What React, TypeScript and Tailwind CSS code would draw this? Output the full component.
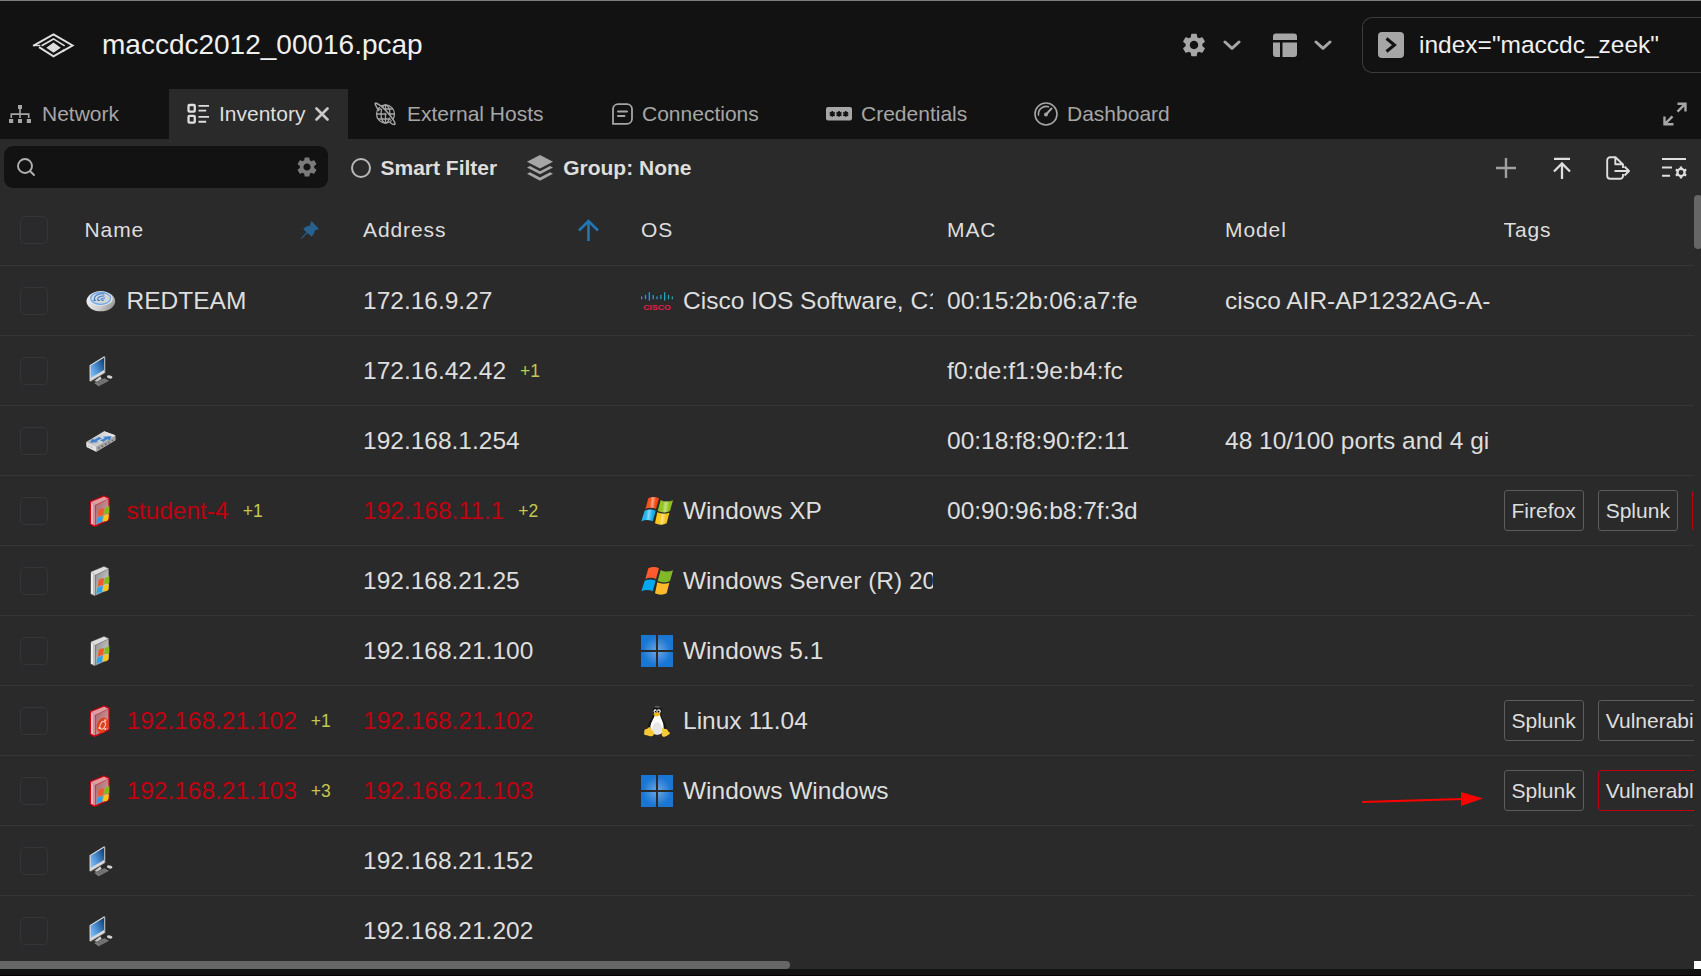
import React from "react";
import { MdSettings } from "react-icons/md";

type Device = "ap" | "pc" | "switch" | "winServer" | "winServerAlert" | "ubuntuAlert";
type OsLogo = "cisco" | "xp" | "win7" | "win11" | "linux";

interface Host {
  device: Device;
  name?: string;
  nameExtra?: string;
  address: string;
  addressExtra?: string;
  alert?: boolean;
  logo?: OsLogo;
  os?: string;
  mac?: string;
  model?: string;
  tags?: { label: string; alert?: boolean }[];
}

const hosts: Host[] = [
  { device: "ap", name: "REDTEAM", address: "172.16.9.27", logo: "cisco", os: "Cisco IOS Software, C1", mac: "00:15:2b:06:a7:fe", model: "cisco AIR-AP1232AG-A-" },
  { device: "pc", address: "172.16.42.42", addressExtra: "+1", mac: "f0:de:f1:9e:b4:fc" },
  { device: "switch", address: "192.168.1.254", mac: "00:18:f8:90:f2:11", model: "48 10/100 ports and 4 gi" },
  { device: "winServerAlert", name: "student-4", nameExtra: "+1", address: "192.168.11.1", addressExtra: "+2", alert: true, logo: "xp", os: "Windows XP", mac: "00:90:96:b8:7f:3d", tags: [{ label: "Firefox" }, { label: "Splunk" }, { label: "Vulnerable", alert: true }] },
  { device: "winServer", address: "192.168.21.25", logo: "win7", os: "Windows Server (R) 20" },
  { device: "winServer", address: "192.168.21.100", logo: "win11", os: "Windows 5.1" },
  { device: "ubuntuAlert", name: "192.168.21.102", nameExtra: "+1", address: "192.168.21.102", alert: true, logo: "linux", os: "Linux 11.04", tags: [{ label: "Splunk" }, { label: "Vulnerability" }] },
  { device: "winServerAlert", name: "192.168.21.103", nameExtra: "+3", address: "192.168.21.103", alert: true, logo: "win11", os: "Windows Windows", tags: [{ label: "Splunk" }, { label: "Vulnerable", alert: true }] },
  { device: "pc", address: "192.168.21.152" },
  { device: "pc", address: "192.168.21.202" },
];

function Gradients() {
  return (
    <svg className="absolute h-0 w-0" aria-hidden="true">
      <defs>
        <radialGradient id="win11" gradientUnits="userSpaceOnUse" cx="48" cy="48" r="58">
          <stop offset="0" stopColor="#6ba7e6" />
          <stop offset="0.75" stopColor="#1976d2" />
        </radialGradient>
        <linearGradient id="apBody" x1="0" x2="1" y1="0.3" y2="0.8">
          <stop offset="0" stopColor="#f2f2f2" />
          <stop offset="0.55" stopColor="#d0d0d0" />
          <stop offset="1" stopColor="#8c8c8c" />
        </linearGradient>
        <linearGradient id="screen" x1="0" x2="1" y1="1" y2="0.2">
          <stop offset="0" stopColor="#8fc4f5" />
          <stop offset="0.5" stopColor="#4b8fd4" />
          <stop offset="1" stopColor="#12437c" />
        </linearGradient>
        <linearGradient id="face" x1="0" x2="1" y1="0" y2="1">
          <stop offset="0" stopColor="#8e8e8e" />
          <stop offset="1" stopColor="#d8d8d8" />
        </linearGradient>
        <linearGradient id="faceRed" x1="0" x2="1" y1="0" y2="1">
          <stop offset="0" stopColor="#a2686c" />
          <stop offset="1" stopColor="#e2a5a8" />
        </linearGradient>
        <linearGradient id="slab" x1="0" x2="1">
          <stop offset="0" stopColor="#b9b9b9" />
          <stop offset="1" stopColor="#ececec" />
        </linearGradient>
        <linearGradient id="shine" x1="0" x2="1" y1="0" y2="0.1">
          <stop offset="0" stopColor="#fff" stopOpacity="0" />
          <stop offset="0.4" stopColor="#fff" stopOpacity="0.1" />
          <stop offset="0.55" stopColor="#fff" stopOpacity="0.5" />
          <stop offset="0.8" stopColor="#fff" stopOpacity="0" />
        </linearGradient>
      </defs>
    </svg>
  );
}

function ServerCase({ alert, children }: { alert?: boolean; children: React.ReactNode }) {
  return (
    <>
      <path d="M17 20 57 3 72 10V74L28 94 16 87Z" fill={alert ? "#c22a33" : "#6d6d6d"} stroke={alert ? "#d3000f" : "none"} strokeWidth={alert ? 4 : 0} strokeLinejoin="round" />
      <path d="M18 21 57 5 70 11 30 30Z" fill={alert ? "#dc9ea1" : "#dedede"} />
      <path d="M18 22 30 30V91L18 86Z" fill={alert ? "#f0b9bb" : "#ececec"} />
      <path d="M24 26 30 30V91L24 89Z" fill={alert ? "#d28f93" : "#c0c0c0"} />
      <path d="M32 31 70 13V72L32 90Z" fill={alert ? "url(#faceRed)" : "url(#face)"} />
      {children}
    </>
  );
}

function IsoWindows() {
  return (
    <g>
      <path d="M41 46C46 38 51 43 57 39L55 60C50 63 45 59 38 67Z" fill="#f1592a" />
      <path d="M59 40C64 36 68 39 73 31V54C68 59 63 54 57 59Z" fill="#86b916" />
      <path d="M37 70C43 62 48 66 54 62L51 80C46 84 41 79 34 88Z" fill="#2ba5e8" />
      <path d="M57 62C62 58 67 61 72 57L69 75C64 81 59 77 53 81Z" fill="#fbc617" />
    </g>
  );
}

function DeviceIcon({ device }: { device: Device }) {
  return (
    <svg viewBox="0 0 96 96" className="h-8 w-8 shrink-0">
      {device === "ap" && (
        <>
          <ellipse cx="47.5" cy="49" rx="43" ry="30" fill="url(#apBody)" />
          <ellipse cx="47" cy="41" rx="36" ry="22" fill="#dfe3e8" />
          <ellipse cx="47" cy="40" rx="30" ry="18" fill="#cdd5de" stroke="#69a5e3" strokeWidth="3.5" />
          <g fill="none" stroke="#3f80c8" strokeWidth="3.2">
            <path d="M28 45C27 30 43 24 58 27" />
            <path d="M38 45C37 36 47 32 58 33" />
            <path d="M48 45C48 41 52 39 60 39" />
          </g>
          <path d="M27 44H34L31 48H25ZM39 44H45L43 48H37ZM50 44H57L56 47H49Z" fill="#2f6db5" />
        </>
      )}
      {device === "pc" && (
        <>
          <path d="M14 31 58 4 61 6V53L17 80 14 78Z" fill="#9b9b9b" />
          <path d="M14 31 58 4V53L14 79Z" fill="#dadada" />
          <path d="M17 32 57 8V45L17 69Z" fill="url(#screen)" />
          <path d="M28 78 46 64 50 72 36 80Z" fill="#c9c9c9" />
          <path d="M28 84 58 70 72 77 41 94Z" fill="#858585" />
          <path d="M33 84 59 72M37 87 64 74M41 90 68 77M38 79 50 90M47 75 58 85" stroke="#555" strokeWidth="1.6" fill="none" />
          <ellipse cx="74" cy="66" rx="8.5" ry="4.5" transform="rotate(12 74 66)" fill="#d0d0d0" />
        </>
      )}
      {device === "switch" && (
        <>
          <path d="M4 51 58 19 91 31 91 46 34 80 5 66Z" fill="#b8b8b8" />
          <path d="M4 51 58 19 91 31 34 65Z" fill="url(#slab)" />
          <path d="M4 52 34 65V80L5 66Z" fill="#e2e2e2" />
          <path d="M34 65 91 32V46L34 80Z" fill="#a3a3a3" />
          <path d="M12 62V64M20 65V67M42 67V71M52 61V66M62 55V60M72 50V55M82 44V48" stroke="#555" strokeWidth="3.500" />
          <path d="M15 53 21 41 27 44 42 36 51 40 34 49 41 52Z" fill="#3f82cb" />
          <path d="M80 33 74 46 67 43 55 51 45 46 60 39 53 35Z" fill="#3f82cb" />
        </>
      )}
      {device === "winServer" && <ServerCase><IsoWindows /></ServerCase>}
      {device === "winServerAlert" && <ServerCase alert><IsoWindows /></ServerCase>}
      {device === "ubuntuAlert" && (
        <ServerCase alert>
          <ellipse cx="53" cy="61" rx="17" ry="24" transform="rotate(22 53 61)" fill="#e1401c" />
          <ellipse cx="53" cy="61" rx="7.5" ry="12" transform="rotate(22 53 61)" fill="none" stroke="#ffc9b8" strokeWidth="3.5" />
          <circle cx="43" cy="69" r="3" fill="#ffe0d5" />
          <circle cx="61" cy="46" r="3" fill="#ffe0d5" />
          <circle cx="61" cy="72" r="3" fill="#ffe0d5" />
        </ServerCase>
      )}
    </svg>
  );
}

function OsIcon({ logo }: { logo: OsLogo }) {
  const red = "M22 4C32 -1 44 -1 54 4L45 36C34 31 23 32 13 36Z";
  const green = "M59 9C70 15 84 15 96 10L87 42C76 48 62 47 50 42Z";
  const blue = "M11 41C22 36 34 36 44 41L35 73C24 68 12 68 1 73Z";
  const yellow = "M49 46C59 51 73 52 85 47L77 79C66 85 52 84 42 79Z";
  return (
    <svg viewBox="0 0 96 96" className="h-8 w-8 shrink-0">
      {logo === "cisco" && (
        <>
          <path d="M2 36V41M13.5 31V41M25 23V45M36.500 31V41M48 36V41M59.500 31V41M71 23V45M82.500 31V41M94 36V41" stroke="#27a5c9" strokeWidth="3.800" strokeLinecap="round" />
          <text x="7" y="75" textLength="82" lengthAdjust="spacingAndGlyphs" fontFamily="Liberation Sans" fontWeight="700" fontSize="24" fill="#e51f4b">CISCO</text>
        </>
      )}
      {(logo === "xp" || logo === "win7") && (
        <g transform="translate(0 6)">
          <path d={red} fill={logo === "xp" ? "#f4460d" : "#ff5b2e"} />
          <path d={green} fill={logo === "xp" ? "#8cc011" : "#80b927"} />
          <path d={blue} fill={logo === "xp" ? "#14b1f0" : "#00a8ef"} />
          <path d={yellow} fill={logo === "xp" ? "#fdc40e" : "#ffb92a"} />
          {logo === "xp" && (
            <g fill="url(#shine)">
              <path d={red} />
              <path d={green} />
              <path d={blue} />
              <path d={yellow} />
            </g>
          )}
        </g>
      )}
      {logo === "win11" && <path d="M0 0H45V45H0ZM51 0H96V45H51ZM0 51H45V96H0ZM51 51H96V96H51Z" fill="url(#win11)" />}
      {logo === "linux" && (
        <>
          <path d="M49 1C39 1 36 8 37 18C37 30 35 34 29 44C24 53 19 64 22 72C27 87 70 88 75 74C78 62 71 51 65 42C60 33 62 28 62 17C62 7 57 1 49 1Z" fill="#151515" />
          <path d="M39 6C42 0 56 0 60 7C54 10 44 10 39 6Z" fill="#505050" />
          <path d="M42 30C38 42 30 50 28 64C28 82 37 89 48 89C60 89 68 82 68 66C68 52 60 42 57 30Z" fill="#fff" />
          <path d="M34 68C38 46 58 46 63 68C64 80 58 88 48 88C38 88 33 80 34 68Z" fill="#e6e6e6" />
          <ellipse cx="42.5" cy="19" rx="4.5" ry="6" fill="#fff" />
          <ellipse cx="53.5" cy="19" rx="5.5" ry="6.5" fill="#fff" />
          <circle cx="43.5" cy="20" r="2.8" fill="#111" />
          <circle cx="52.5" cy="20" r="3.2" fill="#111" />
          <path d="M37 27C43 21 51 21 59 26C55 32 50 35 45 34C41 33 39 31 37 27Z" fill="#f5b915" />
          <path d="M24 66C28 66 34 76 38 81C41 87 38 93 32 94C25 94 20 91 12 90C8 88 10 83 10 77C12 71 19 74 24 66Z" fill="#f8c932" />
          <path d="M66 67C71 75 76 71 79 74C81 80 87 82 87 84C87 87 77 93 72 95C66 97 62 93 62 87C63 79 62 70 66 67Z" fill="#f8c932" />
        </>
      )}
    </svg>
  );
}

function Chevron() {
  return (
    <svg viewBox="0 0 18 10" className="h-[10px] w-[18px]" fill="none" stroke="#a6a6a6" strokeWidth="3" strokeLinecap="round" strokeLinejoin="round">
      <path d="M2 2 9 8.3 16 2" />
    </svg>
  );
}

function Header() {
  return (
    <header className="flex h-[88px] items-center pl-8">
      <svg viewBox="0 0 128 76" className="h-[25px] w-[43px]" fill="none" stroke="#dedede" strokeWidth="6">
        <path d="M2 39 64 4 122 38 92 55" />
        <path d="M4 38H24" strokeWidth="4" />
        <path d="M28 39 64 18 98 39" strokeWidth="5" />
        <path d="M20 43 64 71 98 51" />
        <path d="M64 29 86 45 64 60 42 45Z" fill="#dedede" stroke="none" />
      </svg>
      <h1 className="ml-[27px] text-[28px] leading-8 text-[#f0f0f0]">maccdc2012_00016.pcap</h1>
      <div className="ml-auto flex items-center">
        <MdSettings className="h-7 w-7 text-[#a6a6a6]" />
        <div className="ml-[15px]"><Chevron /></div>
        <svg viewBox="0 0 24 24" className="ml-8 h-6 w-6" fill="#a6a6a6">
          <path d="M0 7V3.5A3 3 0 0 1 3 .5H21A3 3 0 0 1 24 3.5V7ZM0 9.5H7V24H3A3 3 0 0 1 0 21ZM9.500 9.500H24V21A3 3 0 0 1 21 24H9.500Z" />
        </svg>
        <div className="ml-[17px] mr-px"><Chevron /></div>
      </div>
      <div className="ml-[29px] flex h-[56px] w-[339px] shrink-0 items-center rounded-l-[10px] border border-r-0 border-[#3c3c3c] pl-[15px]">
        <svg viewBox="0 0 26 26" className="h-[26px] w-[26px]">
          <rect width="26" height="26" rx="4" fill="#a6a6a6" />
          <path d="M8.500 6.500 16.500 13 8.500 19.500" fill="none" stroke="#121212" strokeWidth="3" />
        </svg>
        <span className="ml-[15px] text-[24.5px] leading-8 text-[#f0f0f0]">index="maccdc_zeek"</span>
      </div>
    </header>
  );
}

function Tabs() {
  return (
    <nav className="flex h-[50px] items-center text-[21px] text-[#a6a6a6]">
      <div className="flex w-[169px] items-center pl-[9px]">
        <svg viewBox="0 0 22 20" className="h-5 w-[22px]" fill="#a6a6a6">
          <path d="M9 1H13V5H9ZM10.200 5H11.800V10H10.200ZM1.500 14V9.200H20.500V14H18.900V11H3.100V14ZM10.200 9H11.800V14H10.200ZM0 15H4.200V19H0ZM9 15H13V19H9ZM17.800 15H22V19H17.800Z" />
        </svg>
        <span className="ml-[11px]">Network</span>
      </div>
      <div className="flex h-full w-[179px] items-center bg-[#2a2a2a] pl-[18px] text-[#dedede]">
        <svg viewBox="0 0 24 22" className="h-[22px] w-[23px]" fill="none" stroke="#dedede" strokeWidth="2.400">
          <rect x="1.600" y="1.600" width="6.500" height="7" rx="1" />
          <rect x="1.600" y="13" width="6.500" height="7" rx="1" />
          <path d="M12 2.500H23M12 7.500H20M12 14H23M12 19H20" strokeWidth="2" />
        </svg>
        <span className="ml-[9px]">Inventory</span>
        <svg viewBox="0 0 14 14" className="ml-[10px] h-[14px] w-[14px]" stroke="#c9c9c9" strokeWidth="2.600" strokeLinecap="round">
          <path d="M1.500 1.500 12.500 12.500M12.500 1.500 1.500 12.500" />
        </svg>
      </div>
      <div className="flex w-[264px] items-center pl-[26px]">
        <svg viewBox="0 0 22 24" className="h-6 w-[22px]" fill="none" stroke="#a6a6a6" strokeWidth="1.300">
          <circle cx="11.500" cy="12" r="9" />
          <ellipse cx="11.500" cy="12" rx="4.500" ry="9" />
          <path d="M11.500 3V21M2.500 12H20.500M4.300 7H18.700M4.300 17H18.700" />
          <path d="M3.500 2C10 8 16 14 20 20.500" stroke="#121212" strokeWidth="1.500" />
          <path d="M5 9C1 3 0 .5 2.500 1.200C7 3 16 12 20 19C22.500 23.500 20 23.500 16 20.500" strokeWidth="1.500" />
        </svg>
        <span className="ml-[11px]">External Hosts</span>
      </div>
      <div className="flex w-[214px] items-center">
        <svg viewBox="0 0 21 22" className="h-[22px] w-[21px]" fill="none" stroke="#a6a6a6" strokeWidth="1.800" strokeLinecap="round">
          <path d="M1 20.500V6A5 5 0 0 1 6 1.200H15A5 5 0 0 1 20 6V16A5 5 0 0 1 15 20.800H1Z" />
          <path d="M6 8.500H15M6 13H12.500" strokeWidth="2" />
        </svg>
        <span className="ml-[9px]">Connections</span>
      </div>
      <div className="flex w-[208px] items-center">
        <svg viewBox="0 0 26 14" className="h-[14px] w-[26px]">
          <rect width="26" height="13.500" rx="2" fill="#a6a6a6" />
          <path d="M6.300 4V9.800M3.800 5.500 8.800 8.500M8.800 5.500 3.800 8.500M13 4V9.800M10.500 5.500 15.500 8.500M15.500 5.500 10.500 8.500M19.700 4V9.800M17.200 5.500 22.200 8.500M22.200 5.500 17.200 8.500" stroke="#121212" strokeWidth="1.600" />
        </svg>
        <span className="ml-[9px]">Credentials</span>
      </div>
      <div className="flex items-center">
        <svg viewBox="0 0 24 24" className="h-6 w-6" fill="none" stroke="#a6a6a6" strokeWidth="1.600" strokeLinecap="round">
          <circle cx="12" cy="12" r="11" />
          <path d="M4.500 13A7.700 7.700 0 0 1 14.500 4.800" />
          <path d="M12.500 12 17.500 6.500" strokeWidth="2" />
          <circle cx="12" cy="12.500" r="2" fill="#a6a6a6" stroke="none" />
        </svg>
        <span className="ml-[9px]">Dashboard</span>
      </div>
      <svg viewBox="0 0 24 24" className="ml-auto mr-[14px] h-6 w-6" fill="none" stroke="#a6a6a6" strokeWidth="2.400">
        <path d="M14.500 1.700H22.500V9.500M22 2.200 14.500 9.700M1.500 14.500V22.300H10.500M2 21.800 9.500 14.300" />
      </svg>
    </nav>
  );
}

function Toolbar() {
  return (
    <div className="flex h-[56px] items-center pl-1 text-[21px] font-bold text-[#dedede]">
      <div className="flex h-[42px] w-[324px] items-center justify-between rounded-[9px] bg-[#121212] pl-[13px] pr-[9px]">
        <svg viewBox="0 0 18 18" className="h-[18px] w-[18px]" fill="none" stroke="#b0b0b0" strokeWidth="1.900" strokeLinecap="round">
          <circle cx="8" cy="8" r="7" />
          <path d="M13 13 17 17" />
        </svg>
        <MdSettings className="h-6 w-6 text-[#7a7a7a]" />
      </div>
      <svg viewBox="0 0 20 20" className="ml-[23px] mt-px h-5 w-5" fill="none" stroke="#b8b8b8" strokeWidth="2">
        <circle cx="10" cy="10" r="9" />
      </svg>
      <span className="ml-[9.5px] pt-[2px]">Smart Filter</span>
      <svg viewBox="0 0 26 26" className="ml-[30px] mt-[2px] h-[26px] w-[26px]" fill="#a6a6a6">
        <path d="M13 0 26 6.800 13 13.500 0 6.800Z" />
        <path d="M0 12.500 3 11 13 16.200 23 11 26 12.500 13 19.300Z" />
        <path d="M0 18.800 3 17.300 13 22.500 23 17.300 26 18.800 13 25.700Z" />
      </svg>
      <span className="ml-[10px] pt-[2px]">Group: None</span>
      <div className="ml-auto flex items-center pr-[14px] pt-px">
        <svg viewBox="0 0 20 20" className="h-5 w-5" stroke="#a0a0a0" strokeWidth="2.400">
          <path d="M0 10H20M10 0V20" />
        </svg>
        <svg viewBox="0 0 18 22" className="ml-[37px] h-[22px] w-[18px]" fill="none" stroke="#dedede" strokeWidth="2.300">
          <path d="M1 1.800H17M9 22V7M1 14.500 9 6.500 17 14.500" />
        </svg>
        <svg viewBox="0 0 24 24" className="ml-[35px] h-6 w-6" fill="none" stroke="#dedede" strokeWidth="1.900" strokeLinejoin="round">
          <path d="M17 18V19.500A3 3 0 0 1 14 22.800H4.200A3 3 0 0 1 1.200 19.800V4.200A3 3 0 0 1 4.200 1.200H9.500L17 8.500V12M9.300 1.500V8.300H16.500" />
          <path d="M8.500 15H22.500M18.500 10.500 23 15 18.500 19.500" />
        </svg>
        <svg viewBox="0 0 25 22" className="ml-8 h-[22px] w-[25px]" fill="none" stroke="#dedede" strokeWidth="2">
          <path d="M0 2H24M0 10.500H10M0 18.800H8" />
          <circle cx="19" cy="15.500" r="3.600" strokeWidth="2.300" />
          <path d="M19 9.500V12M19 19V21.500M13.800 12.500 16 13.700M22 17.300 24.200 18.500M13.800 18.500 16 17.300M22 13.700 24.200 12.500" strokeWidth="2.400" />
        </svg>
      </div>
    </div>
  );
}

const grid = "grid grid-cols-[70.5px_264.5px_264px_292px_264px_264.5px_191px] items-center";
const cell = "flex h-full items-center overflow-hidden whitespace-nowrap";

function Checkbox() {
  return <div className="h-7 w-7 rounded-[5px] border border-[#343538]" />;
}

function Extra({ children }: { children: React.ReactNode }) {
  return <span className="ml-[14px] pt-[2px] text-[17.5px] text-[#c5c850]">{children}</span>;
}

function TableHead() {
  return (
    <div className={`${grid} h-[71px] shrink-0 gap-x-[14px] border-b border-[#353535] text-[21px] tracking-[0.9px] text-[#dedede]`}>
      <div className={`${cell} pl-5`}><Checkbox /></div>
      <div className={`${cell} justify-between pr-[30px]`}>
        <span>Name</span>
        <svg viewBox="0 0 18 18" className="h-[18px] w-[18px]" fill="#27618f">
          <path d="M10.500 0 18 8C16.500 8.700 15.500 9 14 9.200C13.600 11.500 12.800 13.700 10.500 15.500L6.500 12 1 17.500 0 17.800.3 16.700 5.500 11.200 2.300 8C4.200 5.700 6.500 4.900 9.200 4.500C9.300 2.800 9.600 1.400 10.500 0Z" />
        </svg>
      </div>
      <div className={`${cell} justify-between pr-7`}>
        <span>Address</span>
        <svg viewBox="0 0 21 22" className="h-[22px] w-[21px]" fill="none" stroke="#2176b5" strokeWidth="2.600">
          <path d="M10.500 22V2M1 11.500 10.500 2 20 11.500" />
        </svg>
      </div>
      <div className={cell}>OS</div>
      <div className={cell}>MAC</div>
      <div className={cell}>Model</div>
      <div className={cell}>Tags</div>
    </div>
  );
}

function HostRow({ host }: { host: Host }) {
  const tone = host.alert ? "text-[#c00010]" : "text-[#dedede]";
  return (
    <div className={`${grid} h-[70px] shrink-0 gap-x-[14px] border-b border-[#343536] text-[24.5px] text-[#dedede]`}>
      <div className={`${cell} pl-5`}><Checkbox /></div>
      <div className={cell}>
        <DeviceIcon device={host.device} />
        {host.name && <span className={`ml-[10px] pt-[2px] ${tone}`}>{host.name}</span>}
        {host.nameExtra && <Extra>{host.nameExtra}</Extra>}
      </div>
      <div className={cell}>
        <span className={`pt-[2px] ${tone}`}>{host.address}</span>
        {host.addressExtra && <Extra>{host.addressExtra}</Extra>}
      </div>
      <div className={cell}>
        {host.logo && <OsIcon logo={host.logo} />}
        <span className="ml-[10px] pt-[2px]">{host.os}</span>
      </div>
      <div className={cell}><span className="pt-[2px]">{host.mac}</span></div>
      <div className={cell}><span className="pt-[2px]">{host.model}</span></div>
      <div className={`${cell} gap-[14px] text-[21px]`}>
        {host.tags?.map((tag, i) => (
          <span key={i} className={`flex h-[41px] shrink-0 items-center rounded-[3px] border px-[7px] ${tag.alert ? "border-[#c00010]" : "border-[#5c5c5c]"}`}>
            {tag.label}
          </span>
        ))}
      </div>
    </div>
  );
}

export default function App() {
  return (
    <div className="relative flex h-[976px] w-[1701px] flex-col overflow-hidden border-t border-[#7d7d7d] bg-[#121212] font-['Liberation_Sans',Arial,sans-serif]">
      <Gradients />
      <Header />
      <Tabs />
      <main className="flex h-[830px] flex-col bg-[#2a2a2a]">
        <Toolbar />
        <div className="flex h-[766px] overflow-hidden">
          <div className="flex w-[1694px] shrink-0 flex-col overflow-hidden">
            <TableHead />
            {hosts.map((host) => (
              <HostRow key={host.address} host={host} />
            ))}
          </div>
          <div className="h-[54px] w-2 shrink-0 rounded-[4px] bg-[#666]" />
        </div>
        <div className="flex h-2 justify-between">
          <div className="h-2 w-[790px] rounded-r-[4px] bg-[#666]" />
          <div className="h-2 w-[7px] bg-white" />
        </div>
      </main>
      <div className="mt-auto h-px bg-[#080003]" />
      <svg viewBox="0 0 122 16" className="absolute left-[1361px] top-[790px] h-4 w-[122px]">
        <path d="M1 11 102 8" stroke="#f00" strokeWidth="2" />
        <path d="M100 1 122 7.500 100 15Z" fill="#f00" />
      </svg>
    </div>
  );
}
